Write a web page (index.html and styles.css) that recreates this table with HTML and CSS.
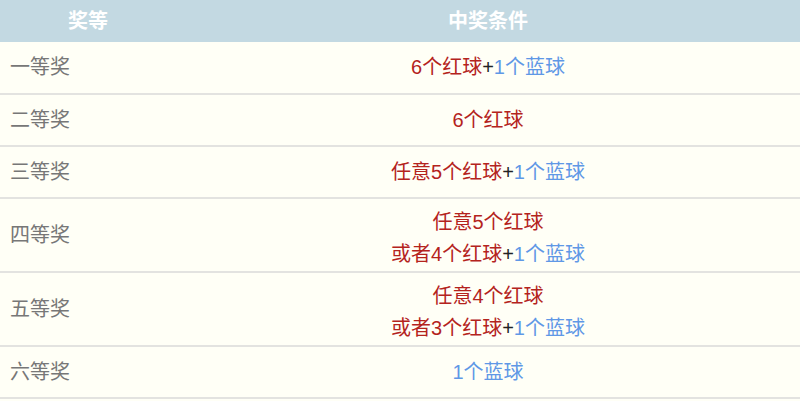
FILE: index.html
```html
<!DOCTYPE html>
<html lang="zh">
<head>
<meta charset="utf-8">
<title>中奖条件</title>
<link rel="stylesheet" href="styles.css">
</head>
<body>
<table class="prize-table">
  <thead>
    <tr>
      <th class="col-level">奖等</th>
      <th class="col-cond">中奖条件</th>
    </tr>
  </thead>
  <tbody>
    <tr>
      <td class="level">一等奖</td>
      <td class="cond"><span class="red">6个红球</span><span class="plus">+</span><span class="blue">1个蓝球</span></td>
    </tr>
    <tr>
      <td class="level">二等奖</td>
      <td class="cond"><span class="red">6个红球</span></td>
    </tr>
    <tr>
      <td class="level">三等奖</td>
      <td class="cond"><span class="red">任意5个红球</span><span class="plus">+</span><span class="blue">1个蓝球</span></td>
    </tr>
    <tr class="multi">
      <td class="level">四等奖</td>
      <td class="cond"><span class="red">任意5个红球</span><br><span class="red">或者4个红球</span><span class="plus">+</span><span class="blue">1个蓝球</span></td>
    </tr>
    <tr class="multi">
      <td class="level">五等奖</td>
      <td class="cond"><span class="red">任意4个红球</span><br><span class="red">或者3个红球</span><span class="plus">+</span><span class="blue">1个蓝球</span></td>
    </tr>
    <tr>
      <td class="level">六等奖</td>
      <td class="cond"><span class="blue">1个蓝球</span></td>
    </tr>
  </tbody>
</table>
</body>
</html>
```
FILE: styles.css
```css
html, body {
  margin: 0;
  padding: 0;
  background: #fffff6;
}
body {
  font-family: "Liberation Sans", "Noto Sans CJK SC", sans-serif;
  font-size: 20px;
}
.prize-table {
  width: 800px;
  border-collapse: collapse;
  border-spacing: 0;
  background: #fffff6;
}
.prize-table th {
  background: #c3d9e2;
  color: #ffffff;
  font-weight: bold;
  height: 42px;
  padding: 0;
  text-align: center;
  line-height: 24px;
}
.col-level {
  width: 176px;
}
.prize-table td {
  border-bottom: 2px solid #e3e3e0;
  height: 52px;
  padding: 4px 10px 5px;
  box-sizing: border-box;
  line-height: 32px;
  vertical-align: middle;
}
.prize-table .multi td {
  padding-top: 7px;
  padding-bottom: 1px;
  line-height: 32px;
}
.prize-table .multi td.level {
  padding-top: 4px;
  padding-bottom: 4px;
}
.level {
  color: #777777;
  text-align: left;
}
.cond {
  text-align: center;
}
.red {
  color: #b4231d;
}
.blue {
  color: #5f98e6;
}
.plus {
  color: #222222;
}
```
